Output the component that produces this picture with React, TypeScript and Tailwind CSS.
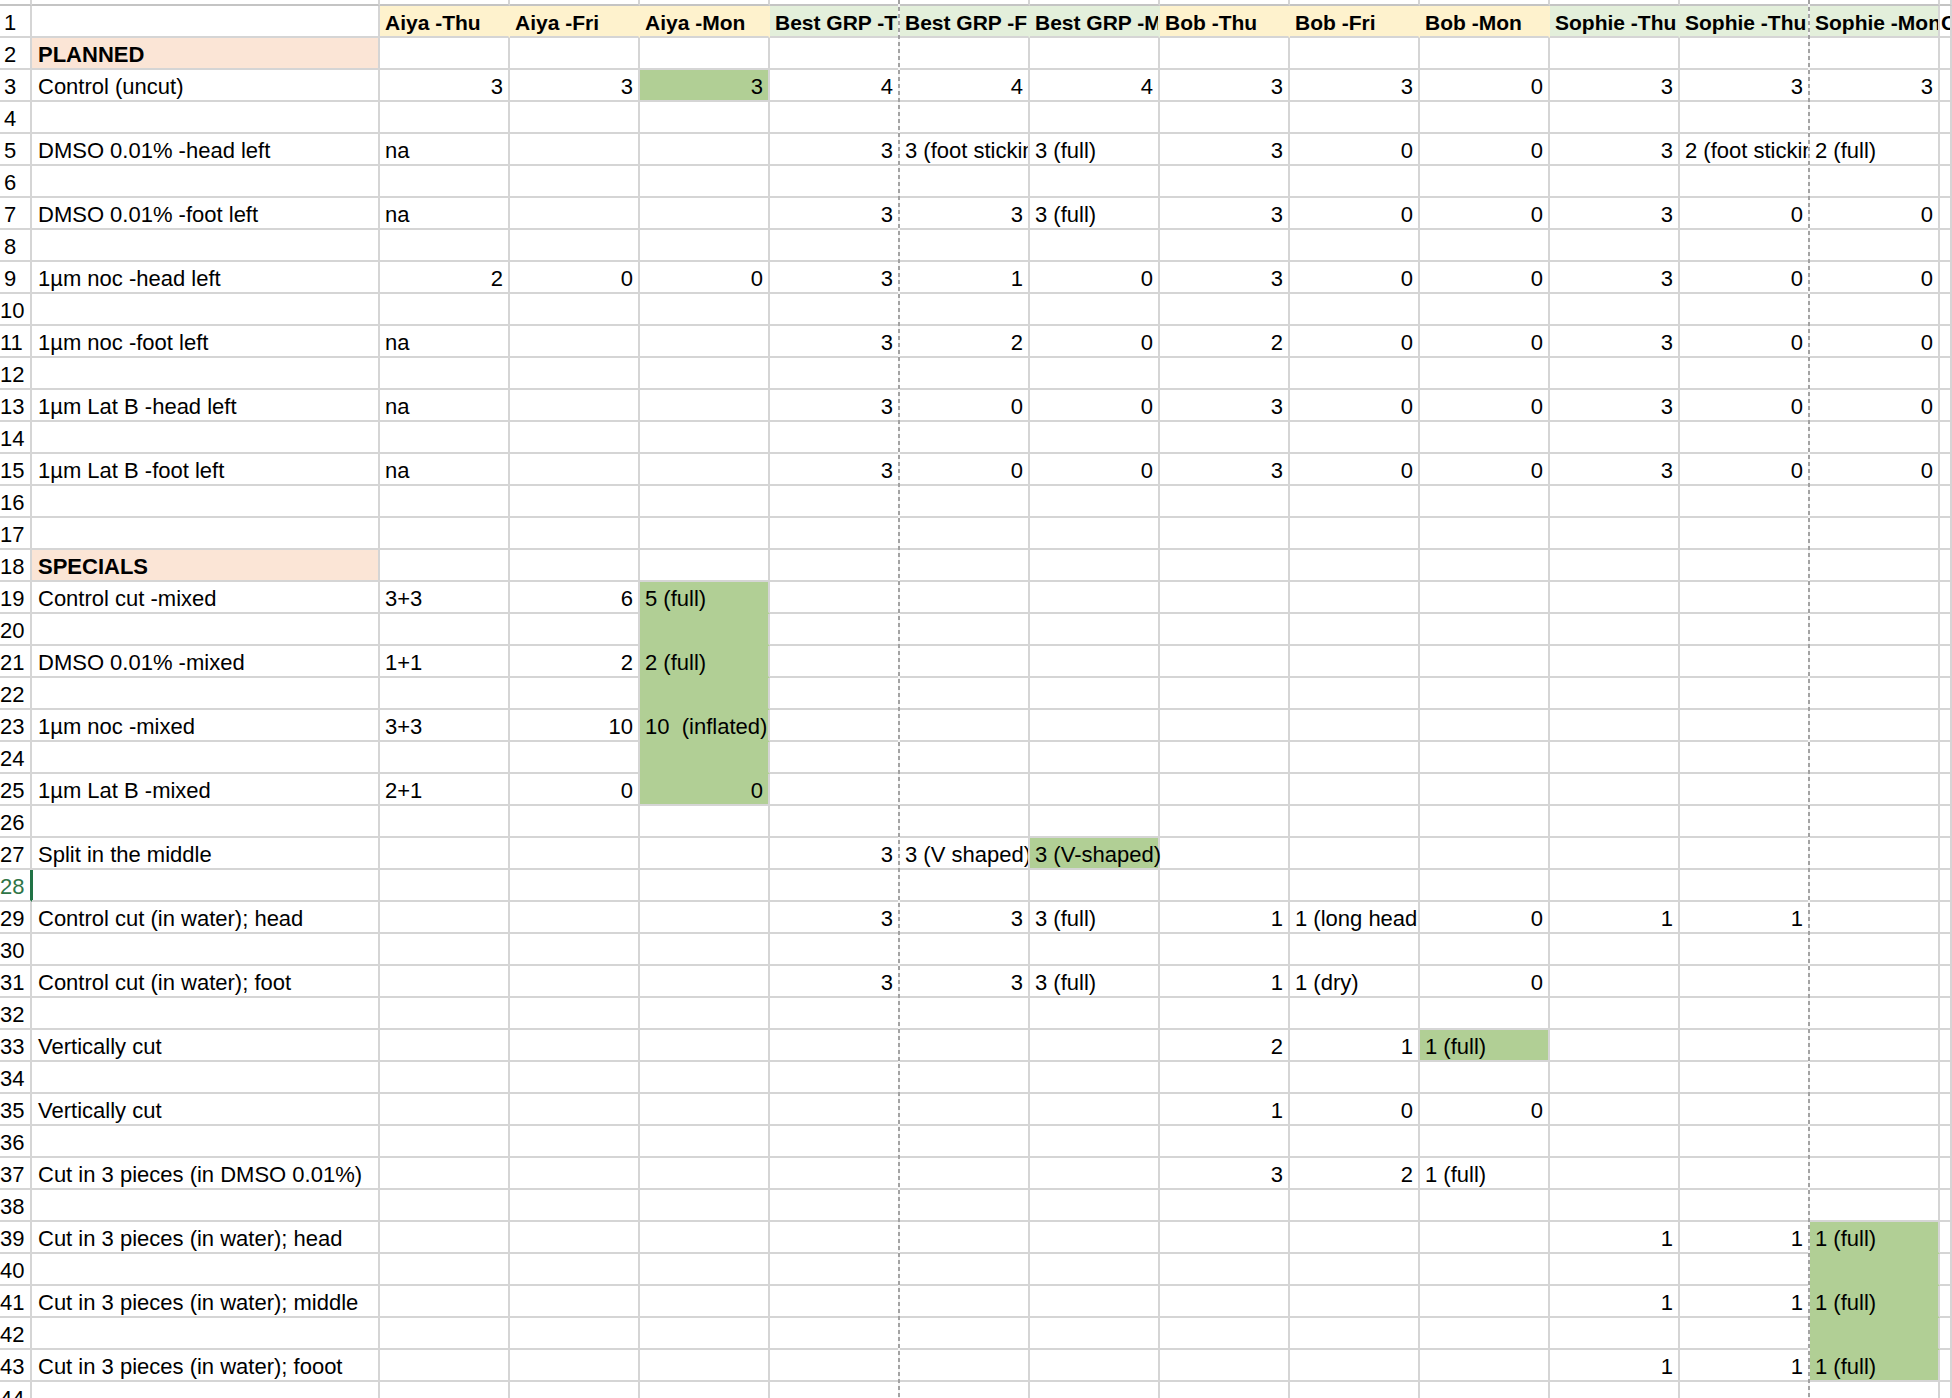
import React from 'react';
import clsx from 'clsx';

type Fill = 'y' | 'g' | 's' | 'G';
type Cell = { v: string; fill?: Fill; bold?: boolean };

const fillBg: Record<Fill, string> = {
  y: 'bg-[#fef2cd]',
  g: 'bg-[#e3efdb]',
  s: 'bg-[#fbe5d6]',
  G: 'bg-[#b1cf95]',
};
const fillR: Record<Fill, string> = {
  y: 'border-r-[#fef2cd]',
  g: 'border-r-[#e3efdb]',
  s: 'border-r-[#fbe5d6]',
  G: 'border-r-[#b1cf95]',
};
const fillB: Record<Fill, string> = {
  y: 'border-b-[#fef2cd]',
  g: 'border-b-[#e3efdb]',
  s: 'border-b-[#fbe5d6]',
  G: 'border-b-[#b1cf95]',
};

const COLS = 14; // A..N
const ROWS = 44;

const headers = [
  '',
  'Aiya -Thu',
  'Aiya -Fri',
  'Aiya -Mon',
  'Best GRP -Thu',
  'Best GRP -Fri',
  'Best GRP -Mon',
  'Bob -Thu',
  'Bob -Fri',
  'Bob -Mon',
  'Sophie -Thu',
  'Sophie -Thu',
  'Sophie -Mon',
  'C',
];
const headerFill: (Fill | undefined)[] = [undefined, 'y', 'y', 'y', 'g', 'g', 'g', 'y', 'y', 'y', 'g', 'g', 'g', undefined];

// row number -> [label, B..M values]
const data: Record<number, [string, string[]]> = {
  3: ['Control (uncut)', ['3', '3', '3', '4', '4', '4', '3', '3', '0', '3', '3', '3']],
  5: ['DMSO 0.01% -head left', ['na', '', '', '3', '3 (foot sticking out)', '3 (full)', '3', '0', '0', '3', '2 (foot sticking out)', '2 (full)']],
  7: ['DMSO 0.01% -foot left', ['na', '', '', '3', '3', '3 (full)', '3', '0', '0', '3', '0', '0']],
  9: ['1µm noc -head left', ['2', '0', '0', '3', '1', '0', '3', '0', '0', '3', '0', '0']],
  11: ['1µm noc -foot left', ['na', '', '', '3', '2', '0', '2', '0', '0', '3', '0', '0']],
  13: ['1µm Lat B -head left', ['na', '', '', '3', '0', '0', '3', '0', '0', '3', '0', '0']],
  15: ['1µm Lat B -foot left', ['na', '', '', '3', '0', '0', '3', '0', '0', '3', '0', '0']],
  19: ['Control cut -mixed', ['3+3', '6', '5 (full)']],
  21: ['DMSO 0.01% -mixed', ['1+1', '2', '2 (full)']],
  23: ['1µm noc -mixed', ['3+3', '10', '10  (inflated)']],
  25: ['1µm Lat B -mixed', ['2+1', '0', '0']],
  27: ['Split in the middle', ['', '', '', '3', '3 (V shaped)', '3 (V-shaped)']],
  29: ['Control cut (in water); head', ['', '', '', '3', '3', '3 (full)', '1', '1 (long head, thin foot)', '0', '1', '1']],
  31: ['Control cut (in water); foot', ['', '', '', '3', '3', '3 (full)', '1', '1 (dry)', '0']],
  33: ['Vertically cut', ['', '', '', '', '', '', '2', '1', '1 (full)']],
  35: ['Vertically cut', ['', '', '', '', '', '', '1', '0', '0']],
  37: ['Cut in 3 pieces (in DMSO 0.01%)', ['', '', '', '', '', '', '3', '2', '1 (full)']],
  39: ['Cut in 3 pieces (in water); head', ['', '', '', '', '', '', '', '', '', '1', '1', '1 (full)']],
  41: ['Cut in 3 pieces (in water); middle', ['', '', '', '', '', '', '', '', '', '1', '1', '1 (full)']],
  43: ['Cut in 3 pieces (in water); fooot', ['', '', '', '', '', '', '', '', '', '1', '1', '1 (full)']],
};

// green fills: [row, colIndex] (colIndex 0 = A)
const greens: [number, number][] = [
  [3, 3],
  [19, 3], [20, 3], [21, 3], [22, 3], [23, 3], [24, 3], [25, 3],
  [27, 6],
  [33, 9],
  [39, 12], [40, 12], [41, 12], [42, 12], [43, 12],
];

function buildSheet(): Cell[][] {
  const sheet: Cell[][] = [];
  for (let r = 1; r <= ROWS; r++) {
    const row: Cell[] = Array.from({ length: COLS }, () => ({ v: '' }));
    if (r === 1) {
      headers.forEach((h, i) => (row[i] = { v: h, bold: true, fill: headerFill[i] }));
    } else if (r === 2) {
      row[0] = { v: 'PLANNED', bold: true, fill: 's' };
    } else if (r === 18) {
      row[0] = { v: 'SPECIALS', bold: true, fill: 's' };
    } else if (data[r]) {
      const [label, vals] = data[r];
      row[0] = { v: label };
      vals.forEach((v, i) => (row[i + 1] = { v }));
    }
    sheet.push(row);
  }
  greens.forEach(([r, c]) => {
    sheet[r - 1][c].fill = 'G';
  });
  return sheet;
}

const sheet = buildSheet();

const isNum = (v: string) => /^\d+$/.test(v);

const App: React.FC = () => {
  return (
    <div className="relative h-[1398px] w-[1952px] overflow-hidden bg-white font-['Liberation_Sans',Arial,sans-serif] text-[22px] text-black">
      <div className="grid grid-cols-[32px_348px_repeat(12,130px)_1fr]">
        {/* strip of the row above, mostly scrolled away */}
        {Array.from({ length: COLS + 1 }).map((_, i) => (
          <div key={'top' + i} className="h-[6px] border-r-2 border-b-2 border-r-[#d5d5d5] border-b-[#c4c4c4]" />
        ))}

        {sheet.map((row, ri) => {
          const r = ri + 1;
          const active = r === 28;
          return (
            <React.Fragment key={r}>
              {/* row number */}
              <div
                className={clsx(
                  'flex h-[32px] items-end border-r-2 border-b-2 border-b-[#d5d5d5] pr-[10px] pb-[2px] leading-[22px]',
                  active ? 'border-r-[#217346] text-[#2f7547]' : 'border-r-[#d5d5d5]'
                )}
              >
                <span className="block w-[20px] whitespace-nowrap text-center">{r}</span>
              </div>
              {row.map((cell, ci) => {
                const right = sheet[ri][ci + 1];
                const below = sheet[ri + 1]?.[ci];
                const num = isNum(cell.v) && ci > 0;
                const clip = !right || right.v !== '' || num;
                const f = cell.fill;
                return (
                  <div
                    key={ci}
                    className={clsx(
                      'flex h-[32px] items-end whitespace-pre border-r-2 border-b-2 pb-[2px] leading-[22px]',
                      ci === 0 ? 'pl-[6px] pr-[5px]' : ci === 13 ? 'pl-[1px]' : 'px-[5px]',
                      num ? 'justify-end' : 'justify-start',
                      clip ? 'overflow-hidden' : 'overflow-visible',
                      cell.bold && 'font-bold',
                      cell.bold && ci > 0 && 'text-[21px]',
                      f && fillBg[f],
                      f && right?.fill ? fillR[f] : 'border-r-[#d5d5d5]',
                      f && below?.fill ? fillB[f] : 'border-b-[#d5d5d5]',
                      active && ci === 0 && 'shadow-[inset_1px_0_0_#217346]'
                    )}
                  >
                    {cell.v}
                  </div>
                );
              })}
            </React.Fragment>
          );
        })}
      </div>

      {/* page break markers */}
      <div className="pointer-events-none absolute top-0 left-[898px] h-full w-[2px] [background-image:repeating-linear-gradient(to_bottom,#a3a3a3_0px,#a3a3a3_4px,#f4f4f4_4px,#f4f4f4_7px)]" />
      <div className="pointer-events-none absolute top-0 left-[1808px] h-full w-[2px] [background-image:repeating-linear-gradient(to_bottom,#a3a3a3_0px,#a3a3a3_4px,#f4f4f4_4px,#f4f4f4_7px)]" />
    </div>
  );
};

export default App;
